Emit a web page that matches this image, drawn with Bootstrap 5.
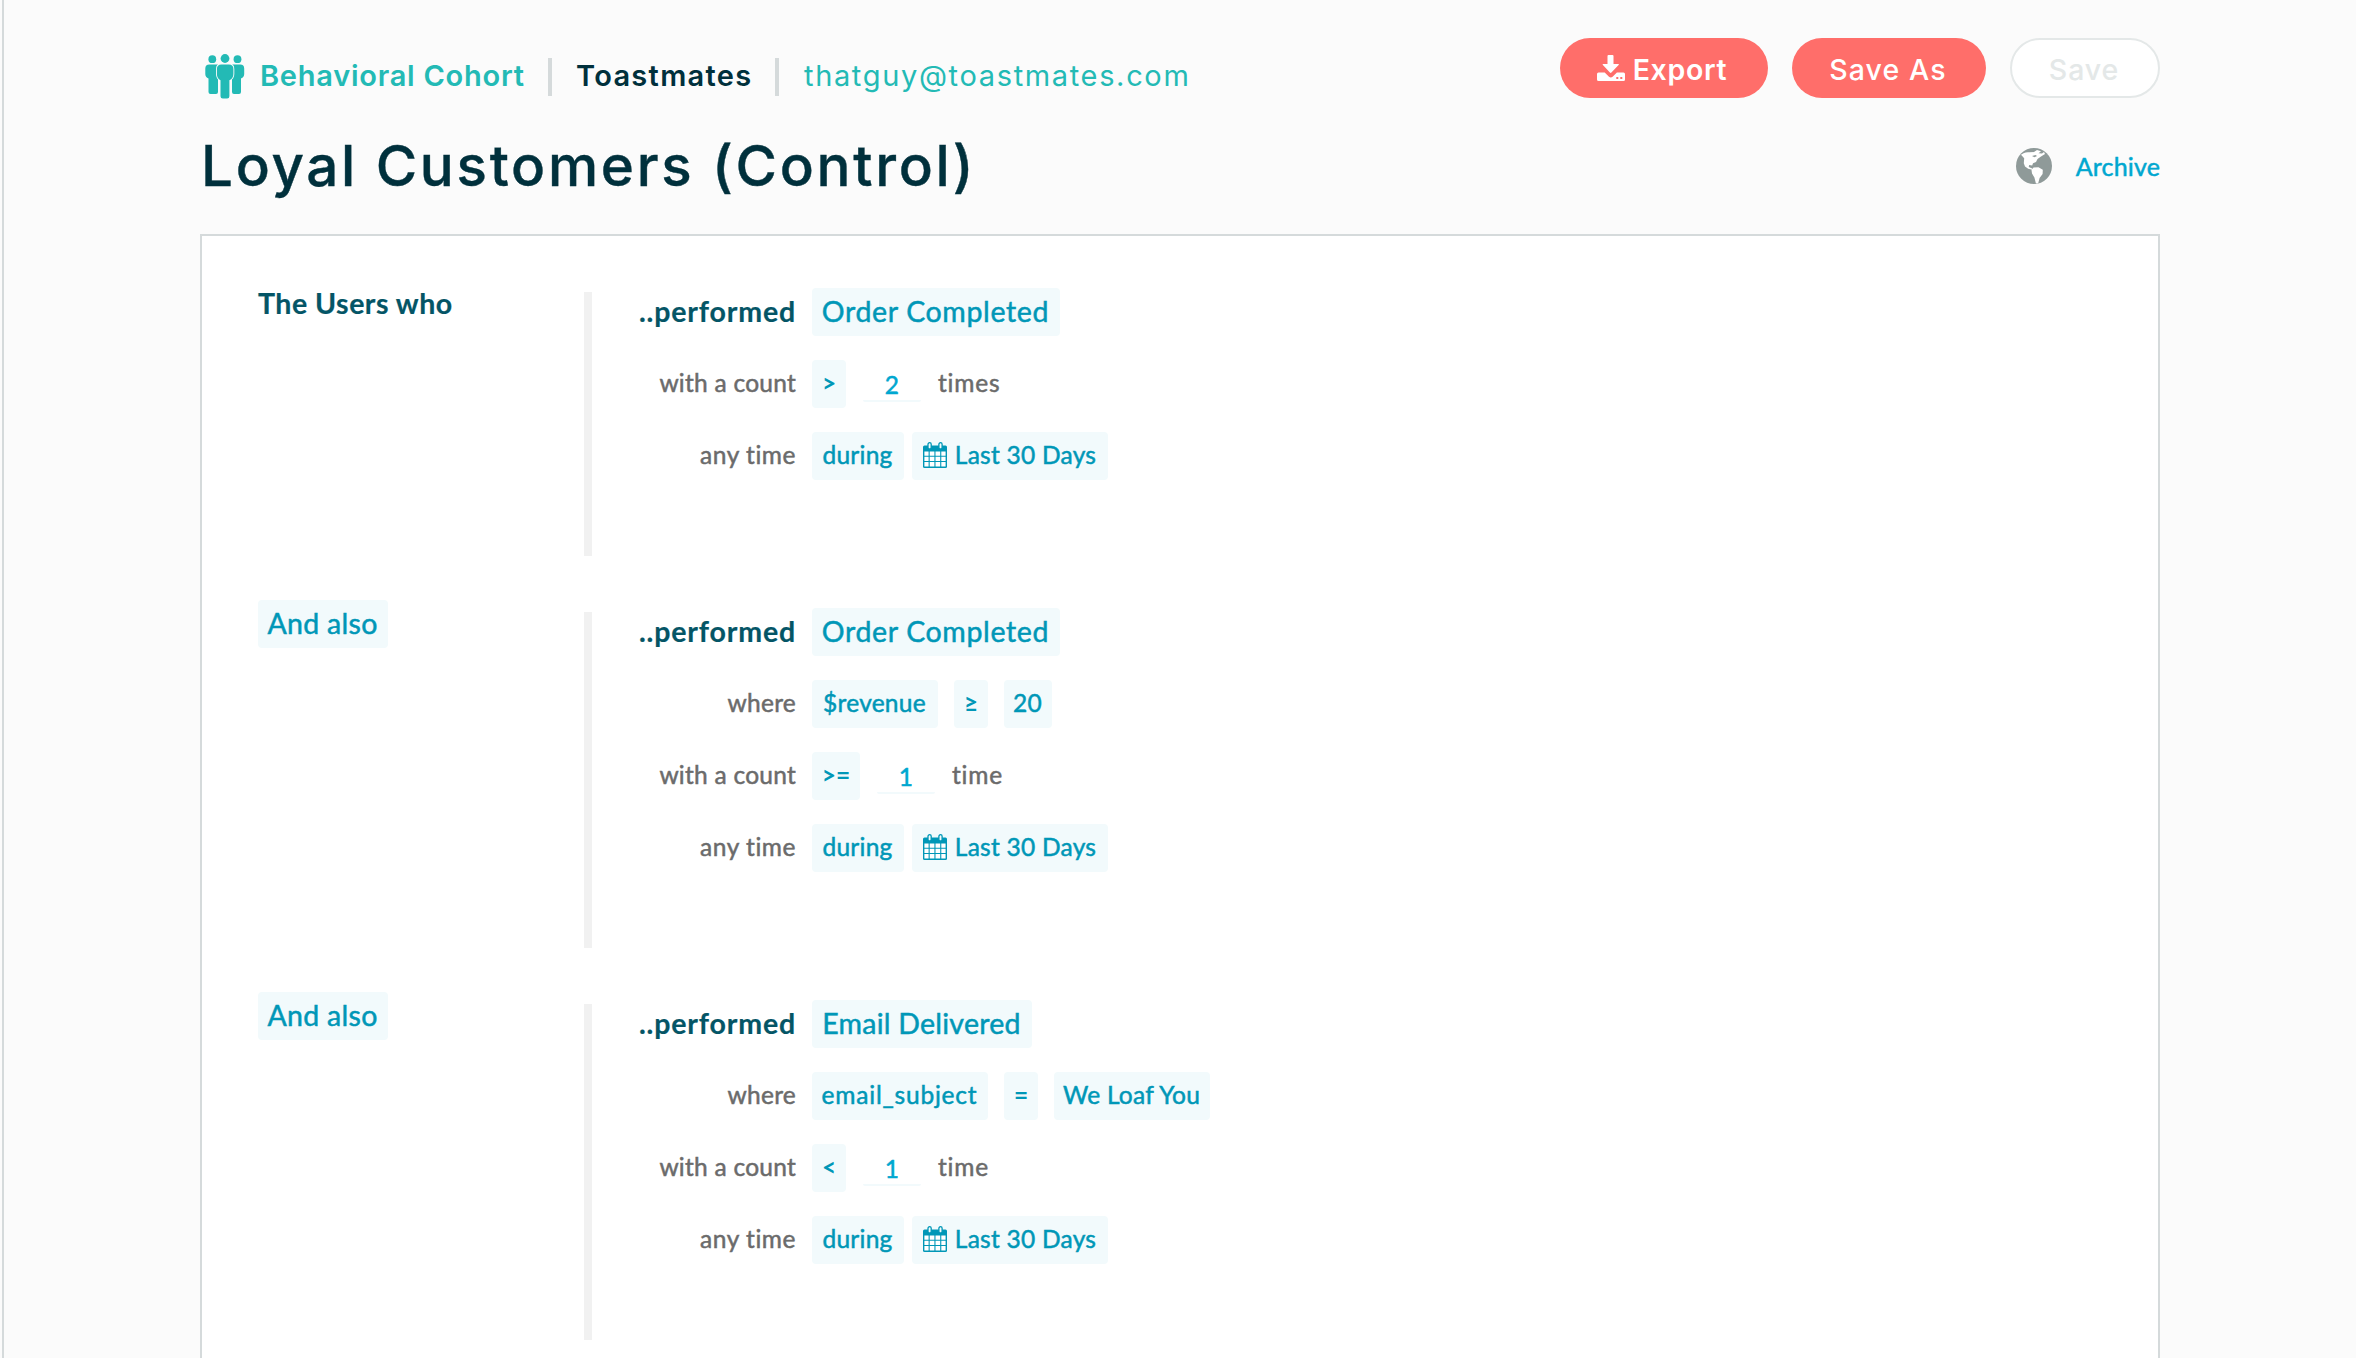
<!DOCTYPE html>
<html lang="en">
<head>
<meta charset="utf-8">
<meta name="viewport" content="width=device-width, initial-scale=1">
<title>Loyal Customers (Control)</title>
<link href="https://cdn.jsdelivr.net/npm/bootstrap@5.3.0/dist/css/bootstrap.min.css" rel="stylesheet">
<style>
:root{--teal:#23bab5;--navy:#00303c;--deep:#045566;--link:#0097b7;--sky:#00a7d0;--coral:#ff6e6a;--rule:#d5dadb;--tint:#f2fafc}
body{margin:0;background:#fbfbfb;font-family:Lato,"Open Sans",sans-serif;color:#6b6b6b}
.page{height:100vh;overflow:hidden;margin-left:2px;border-left:2px solid var(--rule);padding:38px 0 0 196px}
.main-col{width:1960px}
.topline{height:60px}
.crumbs{height:38px;margin-bottom:2px;padding-left:5px;font:600 29px/35px Inter,sans-serif;white-space:nowrap}
.crumbs svg{width:40px;height:46px;margin-right:15px}
.crumb-type{width:264px;padding-bottom:3px;color:var(--teal);letter-spacing:.75px}
.crumb-project{width:175px;padding-bottom:3px;color:var(--navy);letter-spacing:1.3px}
.crumb-mail{padding:0 0 3px 1px;color:var(--teal);font-weight:400;letter-spacing:1.65px}
.divider{width:4px;height:38px;background:var(--rule);margin:0 24px}
.pill-btn{height:60px;border-radius:30px;border:0;background:var(--coral);color:#fff;font:500 28.5px/1 Inter,sans-serif;padding:5px 2px 0 0;letter-spacing:.9px}
.pill-btn.exp{width:208px;font-weight:600;letter-spacing:.7px;padding-right:4px}
.pill-btn.exp svg{width:28px;height:26px;margin:-8px 8px 0 0}
.pill-btn.save-as{width:194px;letter-spacing:1.1px}
.pill-btn.off{width:150px;background:#fff;border:2px solid #e4e8e8;color:#e4e8e8}
.titleline{height:62px;margin:37px 0}
.titleline h1{font:500 56.5px/60px Inter,sans-serif;color:var(--navy);letter-spacing:2.7px;padding-left:1px;-webkit-text-stroke:.4px}
.titleline svg{width:36px;height:36px;margin-right:24px}
.archive{font-size:25px;color:var(--sky);-webkit-text-stroke:.5px;line-height:30px;text-decoration:none;letter-spacing:.15px}
.panel{background:#fff;border:2px solid var(--rule);padding:56px 0 0 56px;height:1400px}
.clause{margin-bottom:56px}
.joiner{width:326px;margin-top:-12px}
.bar{width:8px;background:#f1f1f1}
.steps{margin-top:-4px;padding-bottom:76px;gap:24px}
.step{height:48px;gap:16px;font-size:24.5px;line-height:45px;letter-spacing:.25px;white-space:nowrap;-webkit-text-stroke:.5px}
.step-name{width:204px;text-align:right}
.looser{letter-spacing:.55px}
.heading{font-size:28.5px;line-height:47px;font-weight:700;color:var(--deep);letter-spacing:.5px;-webkit-text-stroke:.2px}
.step-name.heading{letter-spacing:.85px}
.token{height:48px;border-radius:4px;background:var(--tint);color:var(--link);text-align:center;flex:none;padding-right:1px}
.token.event{font-size:28.5px;line-height:47px;letter-spacing:.65px;-webkit-text-stroke:.5px}
.token svg{width:24px;height:26px;margin:-5px 8px 0 0}
.w-event{width:248px}.w-email{width:220px;}.token.w-email{letter-spacing:.25px}
.w-and{width:130px}.token.w-and{letter-spacing:.3px}
.w-op{width:34px}.w-op2{width:48px}.w-during{width:92px}.w-dates{width:196px}
.w-rev{width:126px}.w-subj{width:176px}.token.w-subj{letter-spacing:.8px}.w-loaf{width:156px}
.op{font-weight:700;font-size:24.5px;letter-spacing:0;-webkit-text-stroke:0;padding-right:0}
.count{width:58px;height:42px;border-bottom:2px solid var(--tint);border-radius:2px;padding-top:9px;line-height:31px;text-align:center;color:var(--sky);margin:0 1px}
.unit{letter-spacing:.8px}
</style>
</head>
<body>
<svg class="d-none" xmlns="http://www.w3.org/2000/svg">
  <symbol id="cal" viewBox="0 0 24 26">
    <path fill="#0097b7" d="M1.5 3.5h21q1.5 0 1.5 1.500V24.500q0 1.500-1.500 1.500h-21Q0 26 0 24.500V5q0-1.500 1.500-1.500z"/>
    <path fill="#fff" d="M1.400 9.500h4.200v4.200H1.400zM6.700 9.500h4.700v4.200H6.700zM12.500 9.500h4.700v4.200h-4.700zM18.300 9.500h4.300v4.200h-4.300zM1.400 14.800h4.200v4.200H1.400zM6.700 14.800h4.700v4.200H6.700zM12.500 14.800h4.700v4.200h-4.700zM18.300 14.800h4.300v4.200h-4.300zM1.400 20.100h4.200v4.300H1.400zM6.700 20.100h4.700v4.300H6.700zM12.500 20.100h4.700v4.300h-4.700zM18.300 20.100h4.300v4.300h-4.300z"/>
    <rect x="5" y=".7" width="3.200" height="6.300" rx="1.600" fill="#f2fafc" stroke="#0097b7" stroke-width="1.300"/>
    <rect x="15.900" y=".7" width="3.200" height="6.300" rx="1.600" fill="#f2fafc" stroke="#0097b7" stroke-width="1.300"/>
  </symbol>
</svg>
<div class="page">
<div class="main-col">
  <header>
    <div class="topline d-flex justify-content-between">
      <div class="crumbs d-flex align-items-center align-self-end">
        <svg viewBox="0 0 40 46" fill="#23bab5"><circle cx="7.300" cy="5.200" r="3.900"/><circle cx="32.500" cy="5.200" r="3.900"/><circle cx="20" cy="4.500" r="4.400"/><path d="M4.300 10.500H13V38q0 2-2 2H5.500q-2 0-2-2V24.500Q.3 23 .3 20v-5.500q0-4 4-4zM35.300 10.500H27V38q0 2 2 2h5q2 0 2-2V24.500q3.200-1.500 3.200-4.500v-5.500q0-4-3.900-4z"/><path stroke="#fbfbfb" stroke-width="1.800" paint-order="stroke" d="M16.400 10.500h7.500q4.500 0 4.500 4.500v5q0 4.500-4 6.200V42.200q0 2.300-2.300 2.300h-4.300q-2.300 0-2.300-2.300V26.200q-3.600-1.700-3.600-6.200v-5q0-4.500 4.500-4.500z"/></svg>
        <span class="crumb-type">Behavioral Cohort</span><span class="divider ms-4"></span>
        <span class="crumb-project">Toastmates</span><span class="divider"></span>
        <span class="crumb-mail">thatguy@toastmates.com</span>
      </div>
      <div class="d-flex gap-4">
        <button class="pill-btn exp" type="button"><svg viewBox="0 0 28 26" fill="#fff"><path d="M10.500 1q0-1 1-1h4q1 0 1 1v8h4.700q1.400 0 .4 1.100l-7.200 7.500q-.7.800-1.500 0L5.900 10.100q-1-1.100.4-1.100h4.200z"/><path fill-rule="evenodd" d="M1.500 17.500h6.200l4.300 4.200q1.800 1.500 3.600 0l4.300-4.200h6.600q1.500 0 1.500 1.500v5.500q0 1.500-1.500 1.500h-25Q0 26 0 24.500V19q0-1.500 1.500-1.500zM19.300 22v2h2v-2zM23.300 22v2h2v-2z"/></svg>Export</button>
        <button class="pill-btn save-as" type="button">Save As</button>
        <button class="pill-btn off" type="button">Save</button>
      </div>
    </div>
    <div class="titleline d-flex justify-content-between align-items-center">
      <h1 class="m-0">Loyal Customers (Control)</h1>
      <div class="d-flex align-items-center">
        <svg viewBox="0 0 36 36"><circle cx="18" cy="18" r="18" fill="#8f9a99"/><path fill="#fff" d="M3.500 8Q8 3.500 13.500 4.300L18 4l3-2 4 1.300-2.500 2 3.500.2 2-1.500 1 2-4 2.500-3.500 2.500-1.500 3-3 1.200-.8 2.300-3-.6-.5 2 3.500 1.600v1.200l-4-.9-3.200-2.300-1.200-3.200.4-5L5 6.800zM15.500 22l2-2.500 5-.3 4.300 2.600-.2 4.200-3 4-1.400 5.200q-1.400.6-2.400-.3l-1.400-5.500-2.400-4z"/><path fill="#8f9a99" d="M16 8l3.500-1 1.500 1-2.500 1.300z"/></svg>
        <a class="archive" href="#">Archive</a>
      </div>
    </div>
  </header>
  <main class="panel">
    <section class="clause d-flex">
      <div class="joiner heading">The Users who</div>
      <div class="bar"></div>
      <div class="steps d-flex flex-column">
        <div class="step d-flex"><div class="step-name heading">..performed</div><div class="token event w-event">Order Completed</div></div>
        <div class="step d-flex"><div class="step-name">with a count</div><div class="token op w-op">&gt;</div><div class="count">2</div><div class="unit">times</div></div>
        <div class="step d-flex"><div class="step-name looser">any time</div><div class="d-flex gap-2"><div class="token w-during">during</div><div class="token w-dates"><svg><use href="#cal"/></svg>Last 30 Days</div></div></div>
      </div>
    </section>
    <section class="clause d-flex">
      <div class="joiner"><div class="token event w-and">And also</div></div>
      <div class="bar"></div>
      <div class="steps d-flex flex-column">
        <div class="step d-flex"><div class="step-name heading">..performed</div><div class="token event w-event">Order Completed</div></div>
        <div class="step d-flex"><div class="step-name">where</div><div class="token w-rev">$revenue</div><div class="token op w-op">≥</div><div class="token w-op2">20</div></div>
        <div class="step d-flex"><div class="step-name">with a count</div><div class="token op w-op2">&gt;=</div><div class="count">1</div><div class="unit">time</div></div>
        <div class="step d-flex"><div class="step-name looser">any time</div><div class="d-flex gap-2"><div class="token w-during">during</div><div class="token w-dates"><svg><use href="#cal"/></svg>Last 30 Days</div></div></div>
      </div>
    </section>
    <section class="clause d-flex">
      <div class="joiner"><div class="token event w-and">And also</div></div>
      <div class="bar"></div>
      <div class="steps d-flex flex-column">
        <div class="step d-flex"><div class="step-name heading">..performed</div><div class="token event w-email">Email Delivered</div></div>
        <div class="step d-flex"><div class="step-name">where</div><div class="token w-subj">email_subject</div><div class="token op w-op">=</div><div class="token w-loaf">We Loaf You</div></div>
        <div class="step d-flex"><div class="step-name">with a count</div><div class="token op w-op">&lt;</div><div class="count">1</div><div class="unit">time</div></div>
        <div class="step d-flex"><div class="step-name looser">any time</div><div class="d-flex gap-2"><div class="token w-during">during</div><div class="token w-dates"><svg><use href="#cal"/></svg>Last 30 Days</div></div></div>
      </div>
    </section>
  </main>
</div>
</div>
<script src="https://cdn.jsdelivr.net/npm/bootstrap@5.3.0/dist/js/bootstrap.bundle.min.js"></script>
</body>
</html>
